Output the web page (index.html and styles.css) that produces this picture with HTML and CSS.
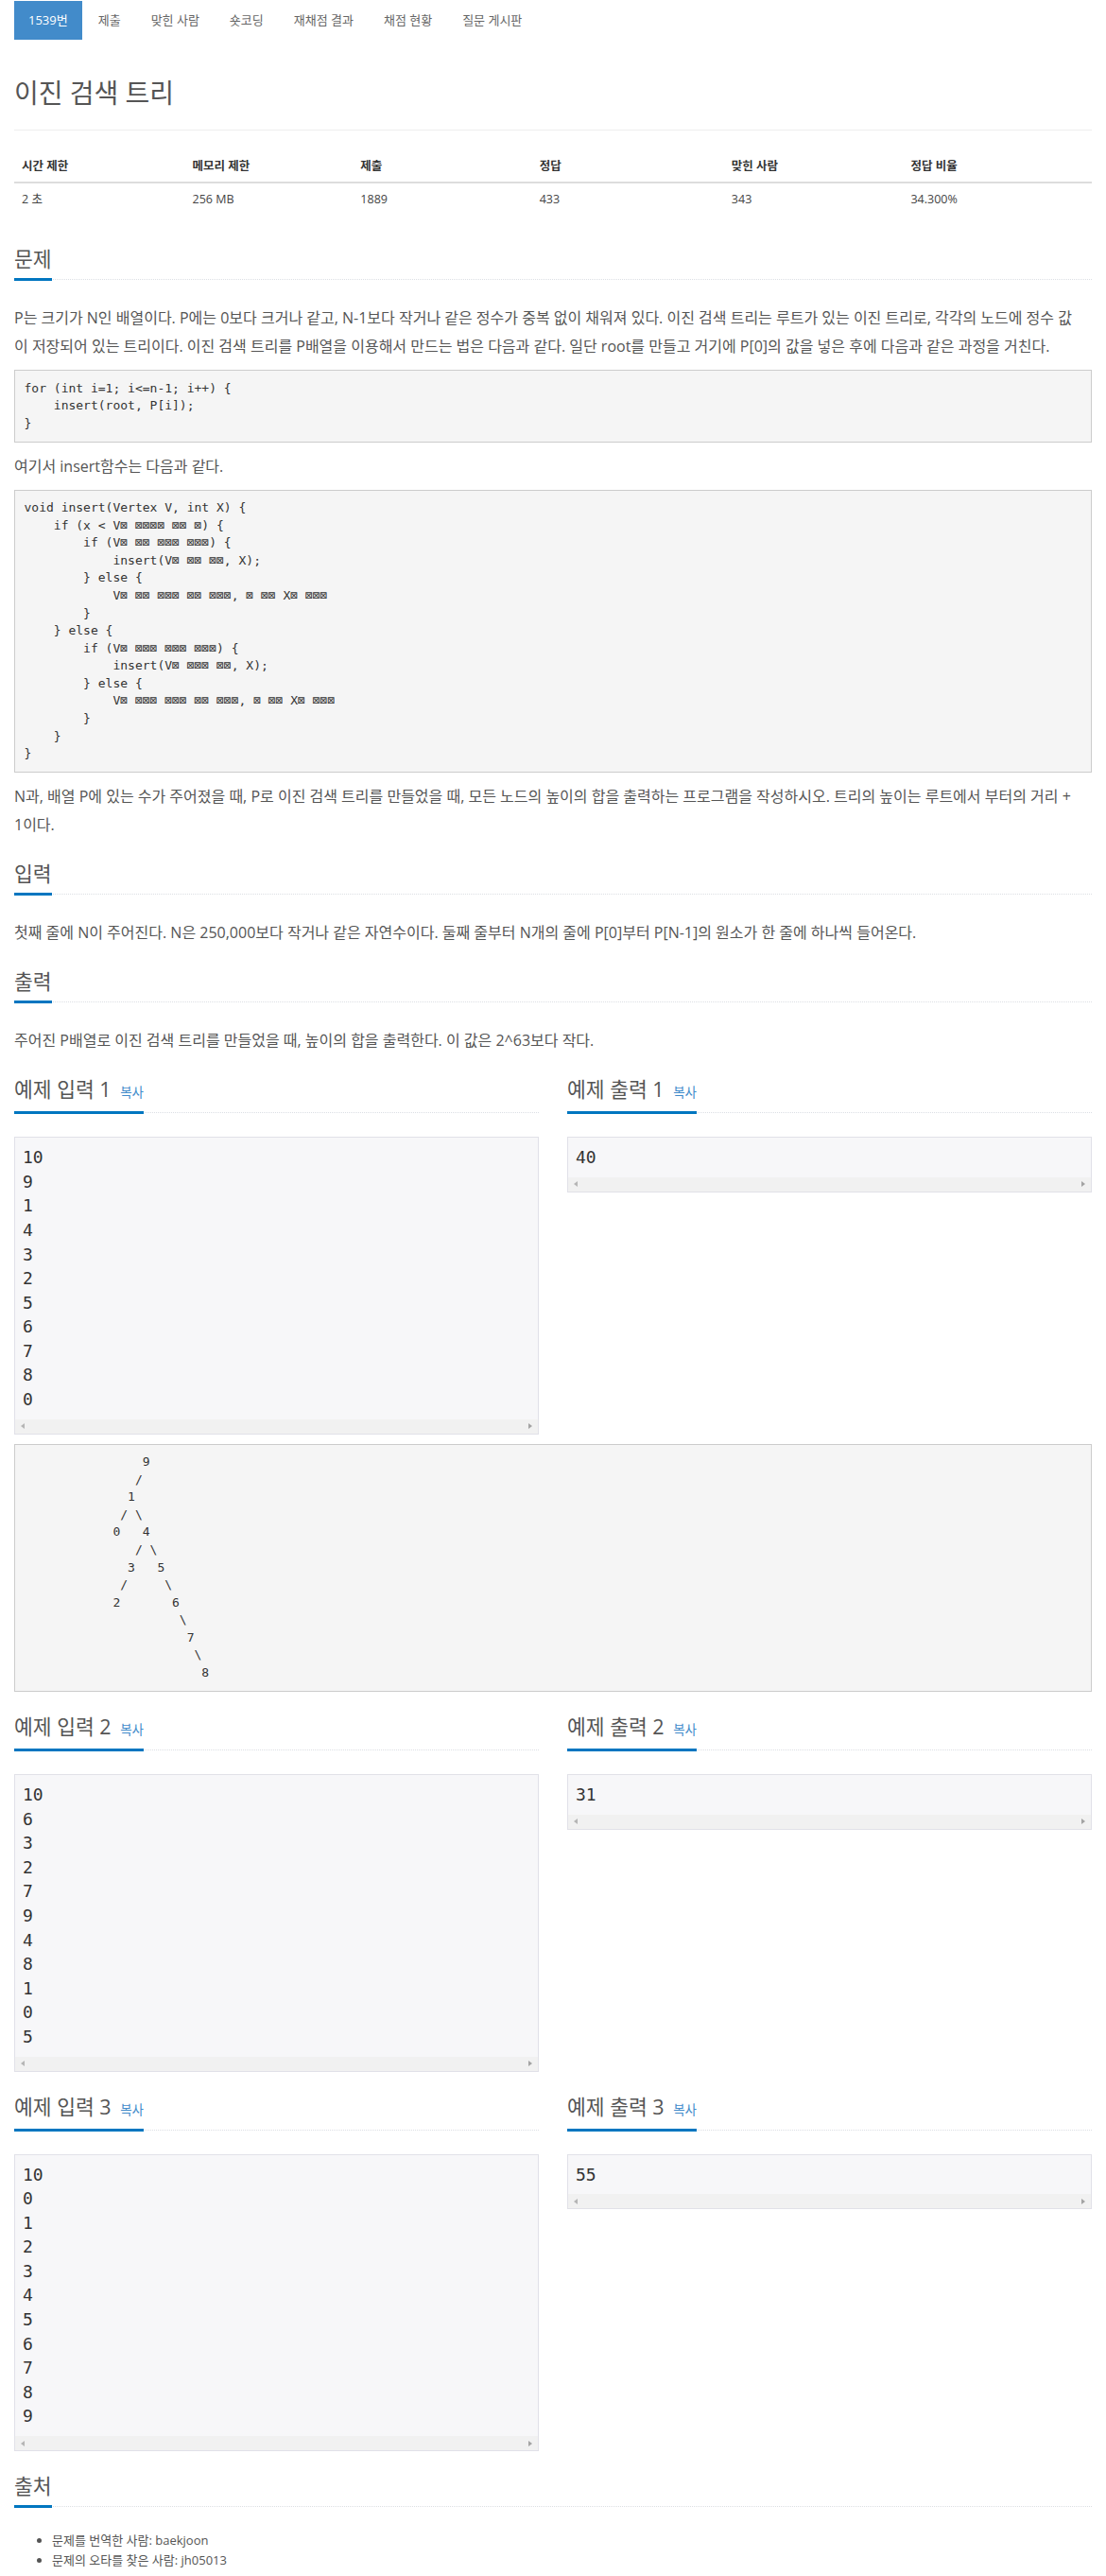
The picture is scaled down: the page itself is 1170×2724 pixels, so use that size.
FILE: index.html
```html
<!DOCTYPE html>
<html lang="ko">
<head>
<meta charset="utf-8">
<title>이진 검색 트리</title>
<link rel="stylesheet" href="styles.css">
</head>
<body>
<div class="container">
  <ul class="nav">
    <li class="active"><a href="#">1539번</a></li>
    <li><a href="#">제출</a></li>
    <li><a href="#">맞힌 사람</a></li>
    <li><a href="#">숏코딩</a></li>
    <li><a href="#">재채점 결과</a></li>
    <li><a href="#">채점 현황</a></li>
    <li><a href="#">질문 게시판</a></li>
  </ul>

  <div class="page-header"><h1 class="title">이진 검색 트리</h1></div>

  <table class="info">
    <thead>
      <tr><th class="c1">시간 제한</th><th class="c2">메모리 제한</th><th class="c3">제출</th><th class="c4">정답</th><th class="c5">맞힌 사람</th><th class="c6">정답 비율</th></tr>
    </thead>
    <tbody>
      <tr><td>2 초</td><td>256 MB</td><td>1889</td><td>433</td><td>343</td><td>34.300%</td></tr>
    </tbody>
  </table>

  <section class="sec">
    <div class="headline"><h2>문제</h2></div>
    <p>P는 크기가 N인 배열이다. P에는 0보다 크거나 같고, N-1보다 작거나 같은 정수가 중복 없이 채워져 있다. 이진 검색 트리는 루트가 있는 이진 트리로, 각각의 노드에 정수 값<br>이 저장되어 있는 트리이다. 이진 검색 트리를 P배열을 이용해서 만드는 법은 다음과 같다. 일단 root를 만들고 거기에 P[0]의 값을 넣은 후에 다음과 같은 과정을 거친다.</p>
<pre class="code">for (int i=1; i&lt;=n-1; i++) {
    insert(root, P[i]);
}</pre>
    <p>여기서 insert함수는 다음과 같다.</p>
<pre class="code">void insert(Vertex V, int X) {
    if (x &lt; V⊠ ⊠⊠⊠⊠ ⊠⊠ ⊠) {
        if (V⊠ ⊠⊠ ⊠⊠⊠ ⊠⊠⊠) {
            insert(V⊠ ⊠⊠ ⊠⊠, X);
        } else {
            V⊠ ⊠⊠ ⊠⊠⊠ ⊠⊠ ⊠⊠⊠, ⊠ ⊠⊠ X⊠ ⊠⊠⊠
        }
    } else {
        if (V⊠ ⊠⊠⊠ ⊠⊠⊠ ⊠⊠⊠) {
            insert(V⊠ ⊠⊠⊠ ⊠⊠, X);
        } else {
            V⊠ ⊠⊠⊠ ⊠⊠⊠ ⊠⊠ ⊠⊠⊠, ⊠ ⊠⊠ X⊠ ⊠⊠⊠
        }
    }
}</pre>
    <p>N과, 배열 P에 있는 수가 주어졌을 때, P로 이진 검색 트리를 만들었을 때, 모든 노드의 높이의 합을 출력하는 프로그램을 작성하시오. 트리의 높이는 루트에서 부터의 거리 +<br>1이다.</p>
  </section>

  <section class="sec">
    <div class="headline"><h2>입력</h2></div>
    <p>첫째 줄에 N이 주어진다. N은 250,000보다 작거나 같은 자연수이다. 둘째 줄부터 N개의 줄에 P[0]부터 P[N-1]의 원소가 한 줄에 하나씩 들어온다.</p>
  </section>

  <section class="sec">
    <div class="headline"><h2>출력</h2></div>
    <p>주어진 P배열로 이진 검색 트리를 만들었을 때, 높이의 합을 출력한다. 이 값은 2^63보다 작다.</p>
  </section>

  <div class="row">
    <div class="col">
      <div class="headline"><h2>예제 입력 1 <a class="copy" href="#">복사</a></h2></div>
      <div class="sample"><pre class="sampledata">10
9
1
4
3
2
5
6
7
8
0</pre><div class="hscroll"><span class="arr-l"></span><span class="arr-r"></span></div></div>
    </div>
    <div class="col">
      <div class="headline"><h2>예제 출력 1 <a class="copy" href="#">복사</a></h2></div>
      <div class="sample"><pre class="sampledata">40</pre><div class="hscroll"><span class="arr-l"></span><span class="arr-r"></span></div></div>
    </div>
  </div>

<pre class="code">                9
               /
              1
             / \
            0   4
               / \
              3   5
             /     \
            2       6
                     \
                      7
                       \
                        8</pre>

  <div class="row">
    <div class="col">
      <div class="headline"><h2>예제 입력 2 <a class="copy" href="#">복사</a></h2></div>
      <div class="sample"><pre class="sampledata">10
6
3
2
7
9
4
8
1
0
5</pre><div class="hscroll"><span class="arr-l"></span><span class="arr-r"></span></div></div>
    </div>
    <div class="col">
      <div class="headline"><h2>예제 출력 2 <a class="copy" href="#">복사</a></h2></div>
      <div class="sample"><pre class="sampledata">31</pre><div class="hscroll"><span class="arr-l"></span><span class="arr-r"></span></div></div>
    </div>
  </div>

  <div class="row">
    <div class="col">
      <div class="headline"><h2>예제 입력 3 <a class="copy" href="#">복사</a></h2></div>
      <div class="sample"><pre class="sampledata">10
0
1
2
3
4
5
6
7
8
9</pre><div class="hscroll"><span class="arr-l"></span><span class="arr-r"></span></div></div>
    </div>
    <div class="col">
      <div class="headline"><h2>예제 출력 3 <a class="copy" href="#">복사</a></h2></div>
      <div class="sample"><pre class="sampledata">55</pre><div class="hscroll"><span class="arr-l"></span><span class="arr-r"></span></div></div>
    </div>
  </div>

  <section class="sec">
    <div class="headline"><h2>출처</h2></div>
    <ul class="source">
      <li>문제를 번역한 사람: baekjoon</li>
      <li>문제의 오타를 찾은 사람: jh05013</li>
    </ul>
  </section>
</div>
</body>
</html>
```

FILE: styles.css
```css
html, body {
  margin: 0;
  padding: 0;
  background: #fff;
}
body {
  font-family: "Open Sans", "Noto Sans CJK KR", sans-serif;
  font-size: 14px;
  line-height: 1.42857;
  color: #555;
}
.container {
  width: 1140px;
  padding: 0 15px;
}

/* nav pills */
.nav {
  list-style: none;
  margin: 0;
  padding: 1px 0 0 0;
  display: flex;
}
.nav li + li {
  margin-left: 2px;
}
.nav a {
  display: block;
  padding: 12px 15px;
  font-size: 13px;
  line-height: 17px;
  color: #666;
  text-decoration: none;
}
.nav .active a {
  background: #428bca;
  color: #fff;
}

/* title */
.page-header {
  margin-top: 41px;
  padding-bottom: 23px;
  border-bottom: 1px solid #eee;
}
.title {
  margin: 0;
  font-size: 28px;
  line-height: 31px;
  font-weight: 400;
  color: #555;
}

/* info table */
.info {
  width: 100%;
  border-collapse: collapse;
  margin: 21px 0 20px;
  font-size: 12.5px;
  line-height: 17px;
}
.info th, .info td {
  text-align: left;
  padding: 8px;
}
.info th {
  font-weight: 700;
  color: #333;
  border-bottom: 2px solid #ddd;
}
.info td {
  color: #444;
}
.info .c1 { width: 181px; }
.info .c2 { width: 177px; }
.info .c3 { width: 189px; }
.info .c4 { width: 205px; }
.info .c5 { width: 190px; }
.info .c6 { width: 198px; }

/* sections */
.sec {
  display: flow-root;
}
.headline {
  display: flex;
  align-items: flex-start;
  margin: 12px 0 25px;
  border-bottom: 1px dotted #dcdfe4;
}
.headline h2 {
  margin: 0 0 -2px;
  padding-bottom: 5px;
  border-bottom: 3px solid #0076c0;
  font-size: 21.5px;
  line-height: 30px;
  font-weight: 400;
  color: #555;
  white-space: nowrap;
}
.copy {
  margin-left: 4px;
  font-size: 13.5px;
  color: #428bca;
  text-decoration: none;
}
.sec p {
  margin: 0 0 10px;
  font-size: 16px;
  line-height: 30px;
}

/* code blocks */
.code {
  margin: 0 0 10px;
  padding: 9.5px;
  font-family: "DejaVu Sans Mono", monospace;
  font-size: 13px;
  line-height: 1.42857;
  color: #333;
  background: #f5f5f5;
  border: 1px solid #ccc;
  white-space: pre;
}

/* sample rows */
.row {
  display: grid;
  grid-template-columns: 1fr 1fr;
  column-gap: 30px;
  align-items: start;
}
.col {
  display: flow-root;
}
.sample {
  margin: 0 0 10px;
  background: #f7f7f9;
  border: 1px solid #e1e1e8;
}
.sampledata {
  margin: 0;
  padding: 8px;
  font-family: "DejaVu Sans Mono", monospace;
  font-size: 18px;
  line-height: 25.6px;
  color: #333;
}
.hscroll {
  height: 15px;
  background: #f1f1f1;
  display: flex;
  align-items: center;
  justify-content: space-between;
  padding: 0 6px;
}
.arr-l {
  width: 0;
  height: 0;
  border-top: 3.5px solid transparent;
  border-bottom: 3.5px solid transparent;
  border-right: 4px solid #b5b5b5;
}
.arr-r {
  width: 0;
  height: 0;
  border-top: 3.5px solid transparent;
  border-bottom: 3.5px solid transparent;
  border-left: 4px solid #a3a3a3;
}

/* source list */
.source {
  margin: 0 0 10px;
  padding-left: 40px;
  font-size: 13px;
  line-height: 20.5px;
  color: #555;
}
```
